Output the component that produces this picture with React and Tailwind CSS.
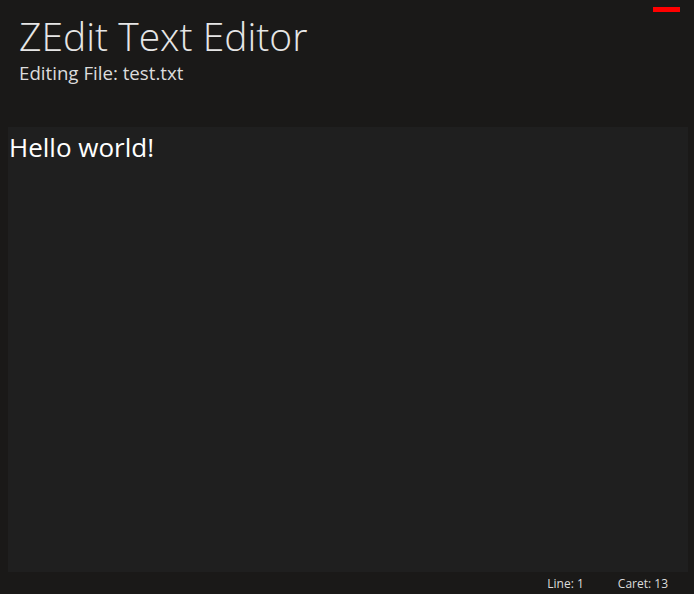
export default function App() {
  return (
    <div
      className="w-[694px] h-[594px] bg-[#1a1918] flex flex-col text-[#e6e6e6] overflow-hidden"
      style={{ fontFamily: '"Open Sans", "Noto Sans", sans-serif' }}
    >
      <div className="relative h-[127px] shrink-0 pl-[19px] pt-[12px]">
        <div className="absolute top-[7px] left-[653px] w-[27px] h-[5px] bg-[#ff0000]" />
        <h1 className="text-[39px] font-light leading-[48px]">ZEdit Text Editor</h1>
        <p className="text-[18.7px] font-normal leading-[24px] mt-[1px] text-[#dcdcdc]">Editing File: test.txt</p>
      </div>
      <div className="mx-[8px] mr-[6px] h-[445px] bg-[#1f1f1f] px-[1px] pt-[4px]">
        <p className="text-[26px] font-normal leading-[32px] text-white">Hello world!</p>
      </div>
      <div className="flex justify-end gap-[34px] pr-[26px] pt-[4px] text-[12px] leading-[16px] text-[#dcdcdc]">
        <span>Line: 1</span>
        <span>Caret: 13</span>
      </div>
    </div>
  );
}
